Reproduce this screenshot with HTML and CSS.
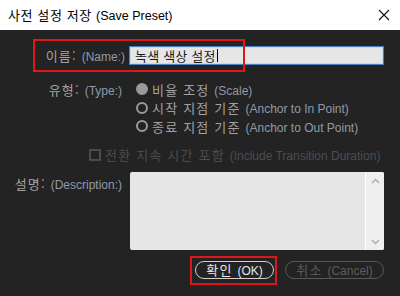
FILE: index.html
```html
<!DOCTYPE html>
<html lang="ko">
<head>
<meta charset="utf-8">
<link rel="stylesheet" href="styles.css">
</head>
<body>
<div class="window">
  <div class="titlebar">
    <span class="title">사전 설정 저장 <span class="en">(Save Preset)</span></span>
    <svg class="close" width="12" height="12" viewBox="0 0 12 12"><path d="M1 1 L11 11 M11 1 L1 11" stroke="#111" stroke-width="1.1" fill="none"/></svg>
  </div>
  <div class="content">
    <div class="form">
      <div class="label name-label">이름: <span class="en">(Name:)</span></div>
      <div class="input"><span class="value">녹색 색상 설정</span><span class="caret"></span></div>

      <div class="label type-label">유형: <span class="en">(Type:)</span></div>
      <div class="radios">
        <div class="radio-row"><span class="radio checked"></span><span>비율 조정 <span class="en">(Scale)</span></span></div>
        <div class="radio-row"><span class="radio"></span><span>시작 지점 기준 <span class="en">(Anchor to In Point)</span></span></div>
        <div class="radio-row"><span class="radio"></span><span>종료 지점 기준 <span class="en">(Anchor to Out Point)</span></span></div>
      </div>
    </div>

    <div class="check-row"><span class="checkbox"></span><span>전환 지속 시간 포함 <span class="en">(Include Transition Duration)</span></span></div>

    <div class="form desc">
      <div class="label desc-label">설명: <span class="en">(Description:)</span></div>
      <div class="textarea">
        <div class="scrollbar">
          <svg width="9" height="6" viewBox="0 0 9 6"><path d="M1 5 L4.5 1.5 L8 5" stroke="#aaa" stroke-width="1.4" fill="none"/></svg>
          <svg width="9" height="6" viewBox="0 0 9 6"><path d="M1 1 L4.5 4.5 L8 1" stroke="#aaa" stroke-width="1.4" fill="none"/></svg>
        </div>
      </div>
    </div>

    <div class="buttons">
      <div class="btn ok"><span>확인 <span class="en">(OK)</span></span></div>
      <div class="btn cancel"><span>취소 <span class="en">(Cancel)</span></span></div>
    </div>
  </div>
  <div class="highlight hl-name"></div>
  <div class="highlight hl-ok"></div>
</div>
</body>
</html>
```
FILE: styles.css
```css
* { box-sizing: border-box; }
html, body { margin: 0; padding: 0; }
body {
  width: 400px;
  height: 296px;
  overflow: hidden;
  background: #232323;
  font-family: "Noto Sans CJK KR", "Liberation Sans", sans-serif;
  font-size: 13px;
  letter-spacing: 1.2px;
}
.en {
  font-family: "Liberation Sans", "Noto Sans CJK KR", sans-serif;
  font-size: 12px;
  letter-spacing: 0;
}
.window {
  position: relative;
  width: 400px;
  height: 296px;
}
.titlebar {
  height: 30px;
  background: #ffffff;
  display: flex;
  align-items: center;
  justify-content: space-between;
  padding: 0 10px 0 8px;
  color: #000;
}
.title { font-size: 13px; line-height: 1; letter-spacing: 0.6px; }
.title .en { font-size: 12.5px; letter-spacing: 0; }
.content {
  padding: 16px 16px 0 0;
  color: #a2a2a2;
}
.form {
  display: grid;
  grid-template-columns: 125px 1fr;
  column-gap: 4px;
  align-items: start;
}
.label {
  text-align: right;
  white-space: nowrap;
  line-height: 19px;
}
.label .en { color: #8e9aab; }
.radios .en, .check-row .en { color: #8e9aab; }
.input {
  height: 19px;
  background: #e6e6e6;
  border: 1px solid #4b7fc2;
  box-shadow: inset 0 0 0 1px #c9d8ec;
  display: flex;
  align-items: center;
  padding-left: 5px;
  color: #1a1a1a;
  font-size: 13px;
  letter-spacing: 0.2px;
}
.caret {
  display: inline-block;
  width: 1px;
  height: 13px;
  background: #000;
  margin-left: 1px;
}
.type-label { margin-top: 13px; margin-right: 3px; }
.radios {
  margin-top: 13px;
  padding-left: 7px;
  display: flex;
  flex-direction: column;
}
.radio-row {
  display: flex;
  align-items: center;
  gap: 4px;
  height: 18.5px;
  white-space: nowrap;
}
.radio {
  width: 12px;
  height: 12px;
  border-radius: 50%;
  border: 2px solid #9a9a9a;
  flex: none;
}
.radio.checked { background: #9a9a9a; }
.check-row {
  display: flex;
  align-items: center;
  gap: 4px;
  padding-left: 89px;
  margin-top: 10px;
  color: #4c4c4c;
  white-space: nowrap;
  height: 18px;
}
.check-row .en { color: #4a4d52; }
.checkbox {
  width: 12px;
  height: 12px;
  border: 2px solid #4c4c4c;
  border-radius: 1px;
  flex: none;
}
.desc { margin-top: 8px; }
.desc-label { margin-top: 2px; margin-right: 3px; }
.desc .textarea { margin-left: 1px; }
.textarea {
  height: 78px;
  background: #e6e6e6;
  border-radius: 2px;
  display: flex;
  justify-content: flex-end;
}
.scrollbar {
  width: 19px;
  background: #efefef;
  border-left: 1px solid #ffffff;
  border-radius: 0 2px 2px 0;
  display: flex;
  flex-direction: column;
  justify-content: space-between;
  align-items: center;
  padding: 6px 0 5px;
}
.buttons {
  display: flex;
  justify-content: flex-end;
  gap: 11px;
  margin-top: 11px;
}
.btn {
  height: 18px;
  border-radius: 9px;
  display: flex;
  align-items: center;
  justify-content: center;
  white-space: nowrap;
  line-height: 1;
}
.btn.ok {
  width: 79px;
  border: 1px solid #d0d0d0;
  color: #eaeaea;
}
.btn.ok .en { color: #e0e6f0; }
.btn.cancel {
  width: 99px;
  border: 1px solid #575757;
  color: #5a5a5a;
}
.btn.cancel .en { color: #5a5d62; }
.highlight {
  position: absolute;
  border: 2px solid #e0161d;
  pointer-events: none;
}
.hl-name { left: 33px; top: 39px; width: 212px; height: 33px; }
.hl-ok { left: 190px; top: 256px; width: 87px; height: 29px; }
```
